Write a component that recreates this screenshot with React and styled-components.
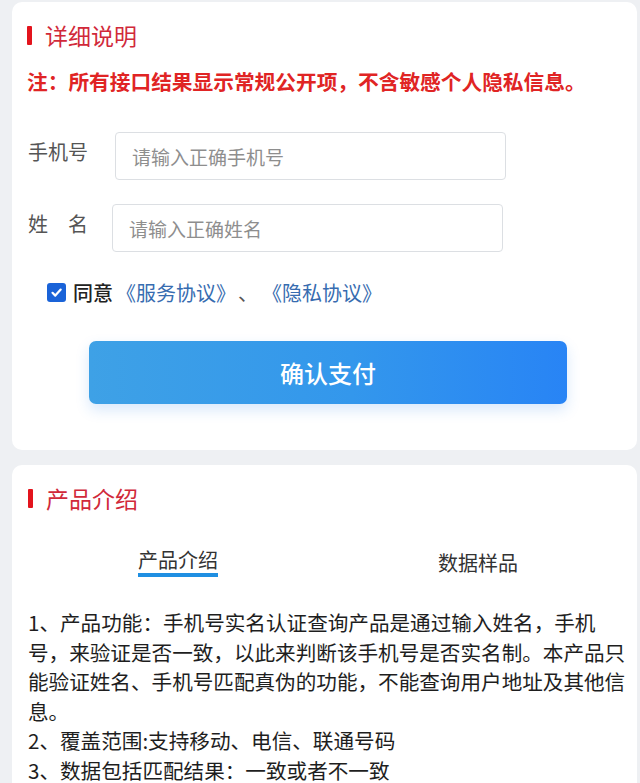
import React, { useState } from 'react';
import styled, { createGlobalStyle } from 'styled-components';

const GlobalStyle = createGlobalStyle`
  body {
    margin: 0;
    background: #eef0f3;
    font-family: "Noto Sans CJK SC", "Noto Sans", sans-serif;
  }
`;

const Page = styled.div`
  display: flex;
  flex-direction: column;
  gap: 15px;
  padding: 2px 3px 0 12px;
  height: 781px;
  overflow: hidden;
`;

const Card = styled.section`
  background: #fff;
  border-radius: 10px;
  padding: ${({ pad }) => pad};
  display: flex;
  flex-direction: column;
`;

const Title = styled.h2`
  display: flex;
  align-items: center;
  gap: 13px;
  margin: 0;
  padding-left: 15px;
  height: 30px;
  font-size: 23px;
  font-weight: 400;
  color: #d1293a;
  &::before {
    content: '';
    width: 5px;
    height: 19px;
    background: #e3141d;
    border-radius: 1px;
  }
`;

const Note = styled.p`
  margin: 16px 0 0 15px;
  line-height: 30px;
  font-size: 20.7px;
  font-weight: 700;
  color: #e02424;
  white-space: nowrap;
`;

const Row = styled.div`
  display: flex;
  align-items: center;
  margin: ${({ first }) => (first ? '36px' : '24px')} 0 0 16px;
`;

const Label = styled.label`
  width: ${({ w }) => w}px;
  flex: none;
  font-size: 20px;
  line-height: 24px;
  color: #555;
  margin-top: -8px;
`;

const Input = styled.input`
  width: 391px;
  height: 48px;
  box-sizing: border-box;
  border: 1px solid #dcdfe3;
  border-radius: 4px;
  padding: 0 16px;
  font-family: inherit;
  font-size: 19px;
  color: #333;
  outline: none;
  &::placeholder {
    color: #8e8e8e;
  }
`;

const Agree = styled.div`
  display: flex;
  align-items: center;
  margin: 28px 0 0 35px;
  height: 24px;
  font-size: 20px;
  color: #222;
`;

const Check = styled.span`
  width: 19px;
  height: 19px;
  border-radius: 3px;
  background: #1a63d8;
  display: flex;
  align-items: center;
  justify-content: center;
  margin-right: 7px;
  cursor: pointer;
`;

const Strong = styled.span`
  font-weight: 500;
  margin-right: 3px;
`;

const DocLink = styled.a`
  color: #376cb0;
  text-decoration: none;
`;

const Sep = styled.span`
  color: #555;
  margin: 0 4px 0 2px;
`;

const PayButton = styled.button`
  align-self: flex-start;
  margin: 37px 0 0 77px;
  width: 478px;
  height: 63px;
  border: none;
  border-radius: 7px;
  background: linear-gradient(90deg, #3ea1e6 0%, #3397ec 55%, #2884f5 100%);
  box-shadow: 0 6px 14px rgba(40, 130, 235, 0.18);
  color: #fff;
  font-family: inherit;
  font-size: 24px;
  font-weight: 500;
  cursor: pointer;
`;

const Tabs = styled.div`
  display: grid;
  grid-template-columns: 300px 300px;
  margin: 35px 0 0 15px;
`;

const Tab = styled.div`
  justify-self: center;
  display: flex;
  flex-direction: column;
  align-items: center;
  font-size: 20px;
  line-height: 24px;
  color: #333;
  cursor: pointer;
  margin-top: ${({ active }) => (active ? '0' : '3px')};
  &::after {
    content: '';
    width: 100%;
    height: 4px;
    margin-top: 1px;
    background: ${({ active }) => (active ? '#1f8fe2' : 'transparent')};
  }
`;

const Intro = styled.div`
  margin: 28px 0 0 15px;
  width: 604px;
  font-size: 20.6px;
  line-height: 29.5px;
  color: #1e1e1e;
  p {
    margin: 0;
  }
`;

const CheckIcon = () => (
  <svg width="13" height="13" viewBox="0 0 13 13">
    <path d="M2.5 6.8l2.8 2.8 5.4-6" fill="none" stroke="#fff" strokeWidth="2.2" strokeLinecap="round" strokeLinejoin="round" />
  </svg>
);

export default function App() {
  const [tab, setTab] = useState(0);
  return (
    <>
      <GlobalStyle />
      <Page>
        <Card pad="18px 16px 46px 0">
          <Title>详细说明</Title>
          <Note>注：所有接口结果显示常规公开项，不含敏感个人隐私信息。</Note>
          <Row first>
            <Label w={87}>手机号</Label>
            <Input placeholder="请输入正确手机号" />
          </Row>
          <Row>
            <Label w={84}>姓　名</Label>
            <Input placeholder="请输入正确姓名" />
          </Row>
          <Agree>
            <Check>
              <CheckIcon />
            </Check>
            <Strong>同意</Strong>
            <DocLink href="#">《服务协议》</DocLink>
            <Sep>、</Sep>
            <DocLink href="#">《隐私协议》</DocLink>
          </Agree>
          <PayButton>确认支付</PayButton>
        </Card>
        <Card pad="18px 0 40px 1px">
          <Title>产品介绍</Title>
          <Tabs>
            <Tab active={tab === 0} onClick={() => setTab(0)}>产品介绍</Tab>
            <Tab active={tab === 1} onClick={() => setTab(1)}>数据样品</Tab>
          </Tabs>
          <Intro>
            <p>1、产品功能：手机号实名认证查询产品是通过输入姓名，手机号，来验证是否一致，以此来判断该手机号是否实名制。本产品只能验证姓名、手机号匹配真伪的功能，不能查询用户地址及其他信息。</p>
            <p>2、覆盖范围:支持移动、电信、联通号码</p>
            <p>3、数据包括匹配结果：一致或者不一致</p>
          </Intro>
        </Card>
      </Page>
    </>
  );
}
